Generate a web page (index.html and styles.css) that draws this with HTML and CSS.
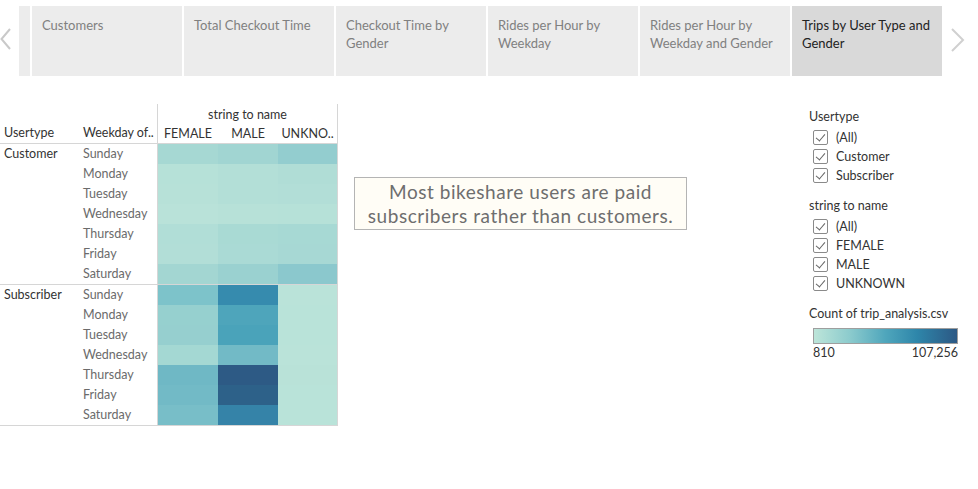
FILE: index.html
```html
<!DOCTYPE html>
<html lang="en">
<head>
<meta charset="utf-8">
<title>Trips by User Type and Gender</title>
<link rel="stylesheet" href="styles.css">
</head>
<body>
<div class="tabbar">
  <div class="arrow arrow-left">
    <svg width="12" height="24" viewBox="0 0 12 24"><polyline points="10,2 1.5,12 10,22" fill="none" stroke="#c9c9c9" stroke-width="2"/></svg>
  </div>
  <div class="tab tab-partial"></div>
  <div class="tab">Customers</div>
  <div class="tab">Total Checkout Time</div>
  <div class="tab">Checkout Time by Gender</div>
  <div class="tab">Rides per Hour by Weekday</div>
  <div class="tab">Rides per Hour by Weekday and Gender</div>
  <div class="tab tab-active">Trips by User Type and Gender</div>
  <div class="arrow arrow-right">
    <svg width="16" height="26" viewBox="0 0 16 26"><polyline points="2,2 13,13 2,24" fill="none" stroke="#d0d0d0" stroke-width="2"/></svg>
  </div>
</div>

<div class="main">
  <div class="xtab">
    <div class="xhead">
      <div class="hl hl-user">Usertype</div>
      <div class="hl hl-week">Weekday of..</div>
      <div class="hcols">
        <div class="htitle">string to name</div>
        <div class="hnames"><span>FEMALE</span><span>MALE</span><span>UNKNO..</span></div>
      </div>
    </div>

    <div class="group">
      <div class="gname">Customer</div>
      <div class="days">
        <div>Sunday</div><div>Monday</div><div>Tuesday</div><div>Wednesday</div><div>Thursday</div><div>Friday</div><div>Saturday</div>
      </div>
      <div class="cells">
        <div class="c" style="background:#a6d8d3"></div><div class="c" style="background:#a1d5d2"></div><div class="c" style="background:#93cdcf"></div>
        <div class="c" style="background:#b6e1d8"></div><div class="c" style="background:#b3dfd7"></div><div class="c" style="background:#b0ddd6"></div>
        <div class="c" style="background:#b7e1d8"></div><div class="c" style="background:#b3dfd7"></div><div class="c" style="background:#b2ded7"></div>
        <div class="c" style="background:#b9e2d9"></div><div class="c" style="background:#b7e1d8"></div><div class="c" style="background:#b6e1d8"></div>
        <div class="c" style="background:#b1ded7"></div><div class="c" style="background:#a9dad4"></div><div class="c" style="background:#a7d9d4"></div>
        <div class="c" style="background:#b2ded7"></div><div class="c" style="background:#aadad5"></div><div class="c" style="background:#a7d8d4"></div>
        <div class="c" style="background:#a3d6d2"></div><div class="c" style="background:#9ad1d0"></div><div class="c" style="background:#8bc8cd"></div>
      </div>
    </div>

    <div class="group">
      <div class="gname">Subscriber</div>
      <div class="days">
        <div>Sunday</div><div>Monday</div><div>Tuesday</div><div>Wednesday</div><div>Thursday</div><div>Friday</div><div>Saturday</div>
      </div>
      <div class="cells">
        <div class="c" style="background:#7dc3ca"></div><div class="c" style="background:#368bae"></div><div class="c" style="background:#bae3d9"></div>
        <div class="c" style="background:#96d0cf"></div><div class="c" style="background:#4ea5bb"></div><div class="c" style="background:#b9e3d9"></div>
        <div class="c" style="background:#96cfcf"></div><div class="c" style="background:#4aa3ba"></div><div class="c" style="background:#b9e3d9"></div>
        <div class="c" style="background:#a4d8d3"></div><div class="c" style="background:#72bac6"></div><div class="c" style="background:#bae3d9"></div>
        <div class="c" style="background:#6fb8c5"></div><div class="c" style="background:#2d5a85"></div><div class="c" style="background:#b9e2d8"></div>
        <div class="c" style="background:#72bac6"></div><div class="c" style="background:#2d6189"></div><div class="c" style="background:#b9e3d9"></div>
        <div class="c" style="background:#78bec8"></div><div class="c" style="background:#3583a8"></div><div class="c" style="background:#b9e3d9"></div>
      </div>
    </div>
  </div>

  <div class="note">Most bikeshare users are paid<br>subscribers rather than customers.</div>

  <div class="legend">
    <div class="lsec">
      <div class="ltitle">Usertype</div>
      <div class="item"><span class="cb"></span>(All)</div>
      <div class="item"><span class="cb"></span>Customer</div>
      <div class="item"><span class="cb"></span>Subscriber</div>
    </div>
    <div class="lsec">
      <div class="ltitle">string to name</div>
      <div class="item"><span class="cb"></span>(All)</div>
      <div class="item"><span class="cb"></span>FEMALE</div>
      <div class="item"><span class="cb"></span>MALE</div>
      <div class="item"><span class="cb"></span>UNKNOWN</div>
    </div>
    <div class="lsec">
      <div class="ltitle">Count of trip_analysis.csv</div>
      <div class="gbar"></div>
      <div class="glabels"><span>810</span><span>107,256</span></div>
    </div>
  </div>
</div>
</body>
</html>
```

FILE: styles.css
```css
* { box-sizing: border-box; }

body {
  margin: 0;
  background: #ffffff;
  font-family: Lato, "Noto Sans", "Liberation Sans", sans-serif;
  color: #333;
}

/* Tab bar */
.tabbar {
  display: flex;
  gap: 2px;
  padding-top: 6px;
  height: 76px;
}
.arrow {
  display: flex;
  align-items: flex-start;
}
.arrow-left { width: 17px; padding-top: 21px; }
.arrow-right { width: 30px; padding-top: 21px; padding-left: 6px; }
.tab {
  width: 150px;
  height: 70px;
  background: #ececec;
  color: #808080;
  font-size: 13px;
  line-height: 18px;
  padding: 10px 10px 0 10px;
}
.tab-partial { width: 11px; padding: 0; }
.tab-active { background: #d9d9d9; color: #222; }

/* Main */
.main {
  display: flex;
  align-items: flex-start;
  padding-top: 28px;
}

/* Crosstab */
.xtab {
  width: 338px;
  flex: none;
  font-size: 12.5px;
}
.xhead {
  display: grid;
  grid-template-columns: 79px 78px 181px;
  height: 40px;
  border-bottom: 1px solid #d6d6d6;
}
.hl {
  align-self: end;
  line-height: 20px;
  color: #333;
}
.hl-user { padding-left: 4px; }
.hl-week { padding-left: 4px; }
.hcols {
  border-left: 1px solid #d6d6d6;
  border-right: 1px solid #d6d6d6;
  display: flex;
  flex-direction: column;
}
.htitle {
  height: 20px;
  line-height: 20px;
  text-align: center;
  padding-top: 1px;
}
.hnames {
  display: grid;
  grid-template-columns: 60px 60px 59px;
  line-height: 19px;
}
.hnames span { text-align: center; }

.group {
  display: grid;
  grid-template-columns: 79px 78px 181px;
  border-bottom: 1px solid #d6d6d6;
}
.gname {
  padding-left: 4px;
  line-height: 20px;
  color: #333;
}
.days div {
  height: 20px;
  line-height: 20px;
  padding-left: 4px;
  color: #6b6b6b;
}
.cells {
  border-left: 1px solid #d6d6d6;
  border-right: 1px solid #d6d6d6;
  display: grid;
  grid-template-columns: 60px 60px 59px;
  grid-auto-rows: 20px;
}

/* Annotation */
.note {
  flex: none;
  width: 333px;
  height: 53px;
  margin-left: 16px;
  margin-top: 73px;
  background: #fffdf6;
  border: 1px solid #b4b4b4;
  color: #6e6e6e;
  font-size: 19px;
  letter-spacing: 0.55px;
  line-height: 24px;
  text-align: center;
  padding-top: 2px;
  white-space: nowrap;
}

/* Legend */
.legend {
  margin-left: auto;
  width: 169px;
  flex: none;
  padding-top: 3px;
  font-size: 12.5px;
}
.lsec { margin-bottom: 11px; }
.ltitle {
  height: 21px;
  line-height: 20px;
  color: #333;
}
.item {
  height: 19px;
  display: flex;
  align-items: center;
  padding-left: 4px;
  color: #333;
}
.cb {
  width: 15px;
  height: 15px;
  border: 1px solid #8a8a8a;
  border-radius: 2px;
  margin-right: 8px;
  position: relative;
  flex: none;
}
.cb::after {
  content: "";
  position: absolute;
  left: 4px;
  top: 1px;
  width: 4px;
  height: 8px;
  border-right: 1.5px solid #666;
  border-bottom: 1.5px solid #666;
  transform: rotate(40deg);
}
.gbar {
  margin-top: 3px;
  margin-left: 4px;
  width: 145px;
  height: 16px;
  border: 1px solid #9e9e9e;
  background: linear-gradient(to right, #bde5d9 0%, #8ccbcd 25%, #4fa6bc 50%, #2e86aa 72%, #2c5884 100%);
}
.glabels {
  display: flex;
  justify-content: space-between;
  width: 149px;
  padding-left: 4px;
  line-height: 18px;
  color: #333;
}
```
